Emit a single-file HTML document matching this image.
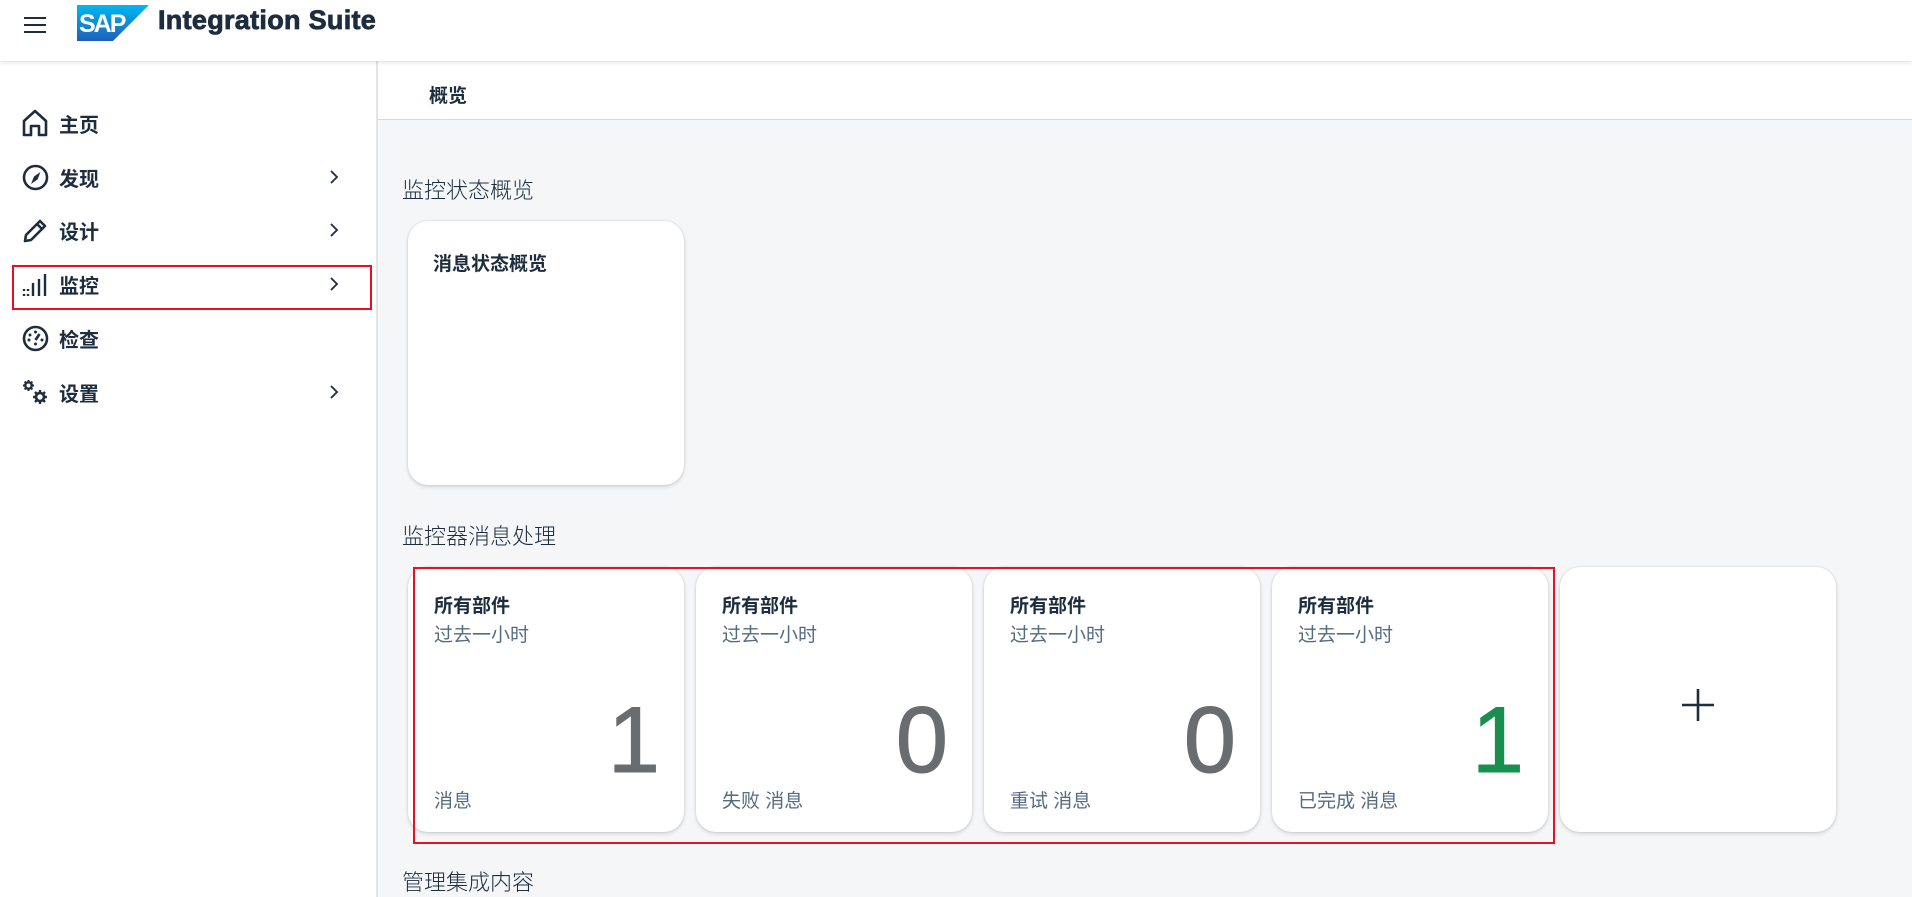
<!DOCTYPE html>
<html><head><meta charset="utf-8"><style>
*{box-sizing:border-box;margin:0;padding:0}
body{width:1912px;height:897px;overflow:hidden;background:#f5f6f7;font-family:"Liberation Sans","Noto Sans CJK SC",sans-serif;color:#1d2d3e;position:relative}
.hdr{position:absolute;left:0;top:0;width:1912px;height:61px;background:#fff;box-shadow:0 1px 4px rgba(0,0,0,.15);z-index:3}
.side{position:absolute;left:0;top:61px;width:378px;height:836px;background:#fff;border-right:2px solid #e5e5e5;z-index:2}
.tabs{position:absolute;left:378px;top:61px;width:1534px;height:59px;background:#fff;border-bottom:1px solid #d9d9d9}
.nav{position:absolute;left:0;width:378px;height:40px;display:flex;align-items:center}
.nav .t{position:absolute;left:59px;font-size:20px;font-weight:bold}
.nav svg.i{position:absolute;left:22px}
.nav .c{position:absolute;left:328px}
.sec{position:absolute;left:402px;font-size:22px;color:#1d2d3e;font-weight:300}
.card{position:absolute;background:#fff;border-radius:20px;box-shadow:0 0 2px rgba(0,0,0,.15),0 2px 4px rgba(0,0,0,.12)}
.tile{top:567px;width:276px;height:265px}
.tile .a{position:absolute;left:26px;top:24px;font-size:19px;font-weight:bold}
.tile .b{position:absolute;left:26px;top:53px;font-size:19px;color:#556b82}
.tile .n{position:absolute;right:24px;top:126px;font-size:94px;color:#6a6d70;line-height:1;-webkit-text-stroke:1px currentColor}
.tile .l{position:absolute;left:26px;top:219px;font-size:19px;color:#556b82}
</style></head><body>
<div class="hdr">
<svg style="position:absolute;left:24px;top:16px" width="22" height="18"><path d="M0 2h22M0 9h22M0 16h22" stroke="#1d2d3e" stroke-width="2"/></svg>
<svg style="position:absolute;left:77px;top:5px" width="72" height="36" viewBox="0 0 72 36"><defs><linearGradient id="g" x1="0" y1="0" x2="0" y2="1"><stop offset="0" stop-color="#00b8f1"/><stop offset="1" stop-color="#1e5fbb"/></linearGradient></defs><path d="M0 0h72L36 36H0z" fill="url(#g)"/><text x="2" y="27" font-family="Liberation Sans" font-weight="bold" font-size="25" fill="#fff" letter-spacing="-2">SAP</text></svg>
<div style="position:absolute;left:158px;top:5px;font-size:27px;font-weight:bold;color:#1d2d3e;-webkit-text-stroke:0.8px #1d2d3e;letter-spacing:0.3px">Integration Suite</div>
</div>
<div class="side">
<div class="nav" style="top:42px"><svg class="i" width="26" height="28" viewBox="0 0 26 28"><path d="M2 12L13 2l11 10v14H17v-9H9v9H2z" fill="none" stroke="#1d2d3e" stroke-width="2.6" stroke-linejoin="round"/></svg><span class="t">主页</span></div>
<div class="nav" style="top:96px"><svg class="i" width="27" height="27" viewBox="0 0 27 27"><circle cx="13.5" cy="13.5" r="11.5" fill="none" stroke="#1d2d3e" stroke-width="2.6"/><path d="M18.5 8l-3 7.5-6.5 4.5 3-7.5z" fill="#1d2d3e"/></svg><span class="t">发现</span><svg class="c" width="12" height="16"><path d="M3 2l6 6-6 6" fill="none" stroke="#1d2d3e" stroke-width="1.8"/></svg></div>
<div class="nav" style="top:149px"><svg class="i" width="27" height="27" viewBox="0 0 27 27"><path d="M3 24l1-6L18 4l5 5L9 23zM15 7l5 5" fill="none" stroke="#1d2d3e" stroke-width="2.6" stroke-linejoin="round"/></svg><span class="t">设计</span><svg class="c" width="12" height="16"><path d="M3 2l6 6-6 6" fill="none" stroke="#1d2d3e" stroke-width="1.8"/></svg></div>
<div class="nav" style="top:203px"><svg class="i" width="26" height="26" viewBox="0 0 26 26"><path d="M2 18v2M2 23v2M6 18v2M6 23v2M11 12v13M17 8v17M23 3v22" stroke="#1d2d3e" stroke-width="2.4"/></svg><span class="t">监控</span><svg class="c" width="12" height="16"><path d="M3 2l6 6-6 6" fill="none" stroke="#1d2d3e" stroke-width="1.8"/></svg></div>
<div style="position:absolute;left:12px;top:204px;width:360px;height:45px;border:2px solid #e81123"></div>
<div class="nav" style="top:257px"><svg class="i" width="27" height="27" viewBox="0 0 27 27"><circle cx="13.5" cy="13.5" r="11.5" fill="none" stroke="#1d2d3e" stroke-width="2.6"/><path d="M13.5 15l4-6" stroke="#1d2d3e" stroke-width="2.6"/><circle cx="8" cy="10" r="1.5" fill="#1d2d3e"/><circle cx="13.5" cy="7" r="1.5" fill="#1d2d3e"/><circle cx="7" cy="15" r="1.5" fill="#1d2d3e"/><circle cx="20" cy="15" r="1.5" fill="#1d2d3e"/><circle cx="13.5" cy="19" r="1.5" fill="#1d2d3e"/></svg><span class="t">检查</span></div>
<div class="nav" style="top:311px"><svg class="i" width="27" height="27" viewBox="0 0 27 27"><circle cx="6.5" cy="6.5" r="3.2" fill="none" stroke="#1d2d3e" stroke-width="2.4"/><path d="M6.5 1v2M6.5 10v2M1 6.5h2M10 6.5h2M2.6 2.6l1.4 1.4M9 9l1.4 1.4M2.6 10.4L4 9M9 4l1.4-1.4" stroke="#1d2d3e" stroke-width="2"/><circle cx="18" cy="18" r="4" fill="none" stroke="#1d2d3e" stroke-width="2.6"/><path d="M18 11v3M18 22v3M11 18h3M22 18h3M13 13l2 2M21 21l2 2M13 23l2-2M21 15l2-2" stroke="#1d2d3e" stroke-width="2.4"/></svg><span class="t">设置</span><svg class="c" width="12" height="16"><path d="M3 2l6 6-6 6" fill="none" stroke="#1d2d3e" stroke-width="1.8"/></svg></div>
</div>
<div class="tabs"><div style="position:absolute;left:51px;top:20px;font-size:19px;font-weight:bold">概览</div></div>
<div class="sec" style="top:173px">监控状态概览</div>
<div class="card" style="left:408px;top:221px;width:276px;height:264px"><div style="position:absolute;left:25px;top:28px;font-size:19px;font-weight:bold">消息状态概览</div></div>
<div class="sec" style="top:519px">监控器消息处理</div>
<div class="card tile" style="left:408px"><div class="a">所有部件</div><div class="b">过去一小时</div><div class="n">1</div><div class="l">消息</div></div>
<div class="card tile" style="left:696px"><div class="a">所有部件</div><div class="b">过去一小时</div><div class="n">0</div><div class="l">失败 消息</div></div>
<div class="card tile" style="left:984px"><div class="a">所有部件</div><div class="b">过去一小时</div><div class="n">0</div><div class="l">重试 消息</div></div>
<div class="card tile" style="left:1272px"><div class="a">所有部件</div><div class="b">过去一小时</div><div class="n" style="color:#188f4f">1</div><div class="l">已完成 消息</div></div>
<div class="card tile" style="left:1560px"><svg style="position:absolute;left:122px;top:122px" width="32" height="32"><path d="M16 0v32M0 16h32" stroke="#1d2d3e" stroke-width="2.6"/></svg></div>
<div style="position:absolute;left:413px;top:567px;width:1142px;height:277px;border:2px solid #e81123"></div>
<div class="sec" style="top:865px">管理集成内容</div>
</body></html>
